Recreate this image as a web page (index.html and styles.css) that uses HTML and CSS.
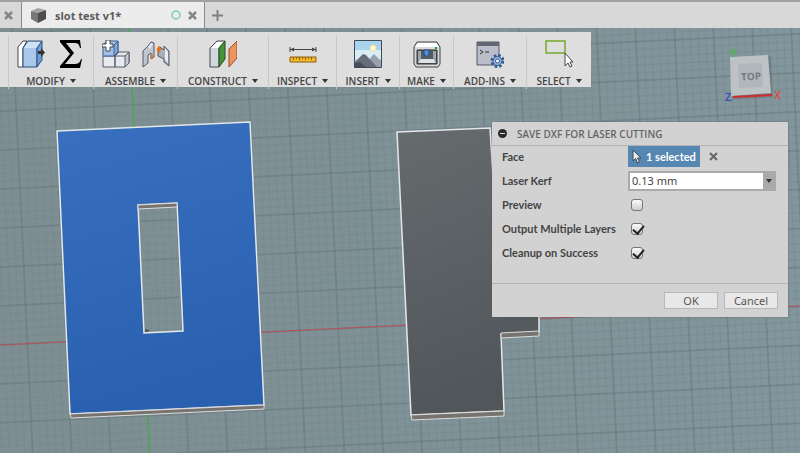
FILE: index.html
```html
<!DOCTYPE html>
<html lang="en">
<head>
  <meta charset="UTF-8">
  <meta name="viewport" content="width=device-width, initial-scale=1.0">
  <title>slot test v1*</title>
  <link rel="stylesheet" href="styles.css">
</head>
<body>

  <header class="tabs">
    <div class="tab tab-prev">
      <button class="tab-close" aria-label="Close previous tab"><svg width="9" height="9" viewBox="0 0 9 9"><path d="M1 1l7 7M8 1l-7 7"/></svg></button>
    </div>
    <div class="tab tab-active">
      <svg class="tab-icon" width="16" height="17" viewBox="0 0 16 17">
        <path fill="#a5a5a5" d="M0 4L7 1l8 2-8 3z"/>
        <path fill="#777" d="M0 4l7 2v10l-7-4z"/>
        <path fill="#4e4e4e" d="M7 6l8-3v9l-8 4z"/>
      </svg>
      <span class="tab-name">slot test v1*</span>
      <svg class="tab-status" width="10" height="10" viewBox="0 0 10 10"><circle cx="5" cy="5" r="4"/></svg>
      <button class="tab-close" aria-label="Close tab"><svg width="9" height="9" viewBox="0 0 9 9"><path d="M1 1l7 7M8 1l-7 7"/></svg></button>
    </div>
    <button class="tab-new" aria-label="New tab"><svg width="11" height="11" viewBox="0 0 11 11"><path d="M5.500 0v11M0 5.500h11"/></svg></button>
  </header>

  <main class="canvas">
    <!-- Model view -->
    <svg class="scene" viewBox="0 28 800 425" preserveAspectRatio="xMinYMin slice">
      <defs>
        <pattern id="grid" width="38.900" height="38.900" patternUnits="userSpaceOnUse" patternTransform="translate(144 338) rotate(-2.760)">
          <path class="grid-minor" d="M7.800 0v39M15.600 0v39M23.400 0v39M31.200 0v39M0 7.800h39M0 15.600h39M0 23.400h39M0 31.200h39"/>
          <path class="grid-major" d="M0 0v39M0 0h39M38.900 0v39M0 38.900h39"/>
        </pattern>
        <linearGradient id="floor" x1="0" y1="0" x2="1" y2="0">
          <stop offset="0" stop-color="#7e8e92"/>
          <stop offset=".45" stop-color="#7e9196"/>
          <stop offset="1" stop-color="#82969d"/>
        </linearGradient>
        <linearGradient id="blue" x1="0" y1="0" x2=".2" y2="1">
          <stop offset="0" stop-color="#386fbe"/>
          <stop offset="1" stop-color="#2a60b0"/>
        </linearGradient>
        <linearGradient id="gray" x1="0" y1="0" x2=".2" y2="1">
          <stop offset="0" stop-color="#666b6e"/>
          <stop offset="1" stop-color="#50565a"/>
        </linearGradient>
      </defs>
      <rect y="28" width="800" height="425" fill="url(#floor)"/>
      <rect y="28" width="800" height="425" fill="url(#grid)"/>
      <path class="axis-x" d="M0 345L800 306"/>
      <path class="axis-y" d="M129 28L149.500 453"/>

      <!-- Selected plate -->
      <path class="edge" fill="url(#blue)" fill-rule="evenodd" d="M57 131L250 122L264 405L70 414zM138 205L144 333L183 331L177 203z"/>
      <path class="side" d="M70 414l194-9v4l-193 9z"/>
      <path class="side" d="M138 205l39-2v4l-39 2z"/>
      <path fill="#555" d="M145 329l5 1-3 2h-2z"/>

      <!-- Second plate -->
      <path class="edge" fill="url(#gray)" d="M397 132L490 128L500 290L539 290L539 332L501 334L504 411L411 415z"/>
      <path class="side" d="M411 415l93-4v5l-92 4z"/>
      <path class="side" d="M501 333l38-2v5l-38 2z"/>

      <!-- View cube -->
      <g class="cube">
        <path fill="#000" opacity=".12" d="M733 58l38-2 2 41-40 2z"/>
        <path fill="#bdc2c5" d="M730 57l38-2 3 38-40 3z"/>
        <path fill="#b0b6bc" d="M738 64l24-1 1 24-24 1z"/>
        <text class="cube-face" x="741" y="80" transform="rotate(-3 750 75)">TOP</text>
        <path stroke="#cf2d2d" stroke-width="2" d="M733 97l39-2"/>
        <text class="cube-axis" fill="#3fbf3f" x="730" y="57">Y</text>
        <text class="cube-axis" fill="#e04545" x="774" y="99">X</text>
        <text class="cube-axis" fill="#3a46cf" x="725" y="101">Z</text>
      </g>
    </svg>

    <nav class="toolbar">
      <div class="group group-cut"></div>
      <div class="group">
        <div class="icons">
          <svg width="28" height="28" viewBox="0 0 28 28">
            <path fill="#fff" stroke="#444" d="M1 7l5-6h4L6 8v19H1z"/>
            <path fill="#a9c8ec" stroke="#2d4f7c" d="M6 8l5-7h14l-5 7v19H6z"/>
            <path fill="#cfe1f5" d="M7 8l4-6h13l-4 6z"/>
            <path fill="#6f9fd4" stroke="#2d4f7c" d="M20 8l5-7v19l-5 7z"/>
            <path fill="#333" d="M21 11h3V8l4 4.500-4 4.500v-3h-3z"/>
          </svg>
          <svg width="28" height="28" viewBox="0 0 28 28">
            <path d="M3 0h20l1 8h-1c-1-4-2-5-6-5H9l8 10L8 24h9c4 0 6-1 7-5h1l-2 9H3v-2l10-12L3 2z"/>
          </svg>
        </div>
        <button class="menu">MODIFY</button>
      </div>
      <div class="group">
        <div class="icons">
          <svg width="28" height="28" viewBox="0 0 28 28">
            <path fill="#e8eaef" stroke="#555c68" d="M1 16h12v11H1zM13 16l4-4h10v11l-4 4H13z"/>
            <path fill="#c3c8d2" stroke="#555c68" d="M23 16l4-4v11l-4 4z"/>
            <path fill="none" stroke="#555c68" d="M13 16h10"/>
            <path fill="#a3c1e8" stroke="#3b5f91" d="M1 5l4-4h11v11l-4 4H1z"/>
            <path fill="#7fa7da" stroke="#3b5f91" d="M12 5l4-4v11l-4 4z"/>
            <path fill="#fff" stroke="#444" d="M4 0h4v4h3v3H8v4H4V7H0V4h4z"/>
          </svg>
          <svg width="28" height="28" viewBox="0 0 28 28">
            <path fill="#c0c6d0" stroke="#525966" d="M1 11l5-5 3-4 3 1v14l-3 2v-6l-3 2v8l-5 4z"/>
            <path fill="#e8ebef" d="M6 7l3-4 2 1-3 5z"/>
            <path fill="#a8afbb" stroke="#525966" d="M16 10l2-3 4 3V6l5 5v15l-5-4v-3l-6-3z"/>
            <path fill="#e8ebef" d="M23 8l3 4v11l-3-3z"/>
            <path stroke="#f36b12" stroke-width="1.500" fill="none" d="M10 14v5M17 6v7M15 10l2-3 2 3"/>
          </svg>
        </div>
        <button class="menu">ASSEMBLE</button>
      </div>
      <div class="group">
        <div class="icons">
          <svg width="28" height="28" viewBox="0 0 28 28">
            <path fill="#d3d8e0" stroke="#454a52" d="M1 8l7-7h8l-6 7v19H1z"/>
            <path fill="#fff" d="M2 8l6-6h7l-6 6z"/>
            <path fill="#459334" stroke="#234f20" d="M10 8l6-7v18l-6 8z"/>
            <path fill="#ee945f" stroke="#9a4c25" d="M20 9l8-8v17l-8 9z"/>
          </svg>
        </div>
        <button class="menu">CONSTRUCT</button>
      </div>
      <div class="group">
        <div class="icons">
          <svg width="28" height="28" viewBox="0 0 28 28">
            <path stroke="#444" fill="none" d="M1 7v5M27 7v5M1 9.500h26"/>
            <path fill="#444" d="M1 9.500l4-2v4zM27 9.500l-4-2v4z"/>
            <path fill="#f3bb2b" stroke="#8f5d0b" d="M1 17h26v5H1z"/>
            <path stroke="#8f5d0b" d="M4.500 17v3M7.500 17v2M10.500 17v3M13.500 17v2M16.500 17v3M19.500 17v2M22.500 17v3"/>
          </svg>
        </div>
        <button class="menu">INSPECT</button>
      </div>
      <div class="group">
        <div class="icons">
          <svg width="28" height="28" viewBox="0 0 28 28">
            <path fill="#a9d4ed" d="M1 1h26v26H1z"/>
            <path fill="#d9edf5" d="M1 10h26v9H1z"/>
            <circle cx="19" cy="8" r="3" fill="#fffbe0" stroke="#f7dc8a"/>
            <path fill="#9aa1ad" d="M12 27l5-10 3-3 7 7v6z"/>
            <path fill="#676d7b" d="M1 22l8-8 3 1 11 12H1z"/>
            <path fill="#474d5b" d="M1 23l5-1 6 5H1z"/>
            <path fill="none" stroke="#3f4857" d="M.5.5h27v27H.5z"/>
          </svg>
        </div>
        <button class="menu">INSERT</button>
      </div>
      <div class="group">
        <div class="icons">
          <svg width="28" height="28" viewBox="0 0 28 28">
            <path fill="#d7dadd" stroke="#444" d="M1 7l3-5h20l3 5v17l-2 3H3l-2-3z"/>
            <path fill="#fff" d="M2 7l3-4h18l3 4z"/>
            <path fill="#555b64" stroke="#333" d="M4 10h20v14H4z"/>
            <path fill="#dfe3e8" d="M7 19h14l2 4H5z"/>
            <path fill="#9fa5ad" d="M5 11h3v7l-3 4zM20 11h3v11l-3-4z"/>
            <path fill="#4d91dc" stroke="#234f87" d="M11 10h5v4l-2.500 3-2.500-3z"/>
            <path fill="#17a51c" d="M22 7h2v2h-2z"/>
          </svg>
        </div>
        <button class="menu">MAKE</button>
      </div>
      <div class="group">
        <div class="icons">
          <svg width="28" height="28" viewBox="0 0 28 28">
            <path fill="#b9bec9" stroke="#555b66" d="M1 2h22v23H1z"/>
            <path fill="#626873" d="M1 2h22v4H1z"/>
            <path fill="none" stroke="#333" d="M4 10l3 2-3 2M9 12h4"/>
            <circle cx="21.500" cy="21" r="5.500" fill="none" stroke="#34598c" stroke-width="3" stroke-dasharray="2.500 1.820"/>
            <circle cx="21.500" cy="21" r="4.500" fill="#8fb4e2" stroke="#34598c"/>
            <circle cx="21.500" cy="21" r="2" fill="#fff" stroke="#34598c"/>
          </svg>
        </div>
        <button class="menu">ADD-INS</button>
      </div>
      <div class="group">
        <div class="icons">
          <svg width="28" height="28" viewBox="0 0 28 28">
            <path fill="none" stroke="#76a92c" stroke-width="1.500" d="M1 1h19v12H1z"/>
            <path fill="#fff" stroke="#444" d="M20 13v13l3-3 2 4 2-1-2-4h3z"/>
          </svg>
        </div>
        <button class="menu">SELECT</button>
      </div>
    </nav>

    <form class="dialog">
      <h1 class="dialog-title">
        <svg width="9" height="9" viewBox="0 0 9 9"><circle cx="4.500" cy="4.500" r="4.500" fill="#2b2b2b"/><path stroke="#ddd" d="M2 4.500h5"/></svg>
        SAVE DXF FOR LASER CUTTING
      </h1>
      <div class="rows">
        <div class="row">
          <label for="face">Face</label>
          <button type="button" class="pick" id="face">
            <svg width="10" height="15" viewBox="0 0 10 15"><path fill="#e9e9e9" stroke="#3a4a58" d="M1 1v11l2.500-2.500L5.500 14l2-1-2-4H9z"/></svg>
            1 selected
          </button>
          <button type="button" class="clear" aria-label="Clear selection"><svg width="9" height="9" viewBox="0 0 9 9"><path d="M1 1l7 7M8 1l-7 7"/></svg></button>
        </div>
        <div class="row">
          <label for="kerf">Laser Kerf</label>
          <div class="combo">
            <input type="text" id="kerf" value="0.13 mm">
            <button type="button" class="combo-arrow" aria-label="Kerf options"></button>
          </div>
        </div>
        <div class="row">
          <label for="preview">Preview</label>
          <input type="checkbox" id="preview">
        </div>
        <div class="row">
          <label for="layers">Output Multiple Layers</label>
          <input type="checkbox" id="layers" checked>
        </div>
        <div class="row">
          <label for="cleanup">Cleanup on Success</label>
          <input type="checkbox" id="cleanup" checked>
        </div>
      </div>
      <div class="actions">
        <button type="button">OK</button>
        <button type="button">Cancel</button>
      </div>
    </form>
  </main>

</body>
</html>
```
FILE: styles.css
```css
* {
  box-sizing: border-box;
}

body {
  margin: 0;
  min-height: 100vh;
  display: flex;
  flex-direction: column;
  font-family: "Noto Sans", "Open Sans", sans-serif;
  font-size: 11px;
  color: #444;
}

button {
  margin: 0;
  padding: 0;
  border: none;
  background: none;
  font: inherit;
  color: inherit;
}

svg {
  display: block;
  flex: none;
}

/* Tabs */
.tabs {
  display: flex;
  height: 28px;
  background: #d8d8d8;
  border-top: 2px solid #a0a19f;
}

.tab {
  display: flex;
  align-items: center;
  border-right: 1px solid #8b8b8b;
}

.tab-prev {
  width: 22px;
  padding-left: 4px;
}

.tab-active {
  width: 183px;
  padding: 0 7px 0 9px;
  background: #ececec;
}

.tab-name {
  flex: 1;
  margin-left: 8px;
  font-family: "Open Sans", sans-serif;
  font-size: 11px;
  font-weight: 700;
  color: #5a5a5a;
}

.tab-status {
  margin-right: 7px;
  fill: none;
  stroke: #7cc9b5;
  stroke-width: 1.5;
}

.tab-close svg,
.clear svg {
  stroke: #858585;
  stroke-width: 2.5;
}

.tab-new {
  padding: 0 7px;
}

.tab-new svg {
  stroke: #808080;
  stroke-width: 2;
}

/* Canvas */
.canvas {
  position: relative;
  flex: 1;
  padding-top: 4px;
  overflow: hidden;
  background: #7f9297;
}

.scene {
  position: absolute;
  top: 0;
  left: 0;
  width: 100%;
  height: 100%;
}

.grid-minor {
  stroke: #73858a;
  stroke-width: 0.6;
}

.grid-major {
  stroke: #66787d;
  stroke-width: 1;
}

.axis-x {
  stroke: #b85055;
}

.axis-y {
  stroke: #3fb83f;
}

.edge {
  stroke: #e4e8ea;
  stroke-width: 1.5;
}

.side {
  fill: #77736f;
  stroke: #dcdcdc;
}

.cube-face {
  font: 700 10px "Open Sans", sans-serif;
  fill: #747b82;
}

.cube-axis {
  font: 600 11px "Open Sans", sans-serif;
}

/* Toolbar */
.toolbar {
  position: relative;
  display: grid;
  grid-template-columns: 9px 85px 84px 91px 68px 63px 54px 73px 64px;
  width: max-content;
  height: 55px;
  padding: 4px 0;
  background: #dedede;
}

.group {
  display: flex;
  flex-direction: column;
  align-items: center;
  border-right: 1px solid #c8c8c8;
}

.group:last-child {
  border-right: none;
}

.icons {
  display: flex;
  gap: 12px;
  margin-top: 4px;
}

.menu {
  display: flex;
  align-items: center;
  gap: 5px;
  margin-top: 5px;
  font-family: "Open Sans", sans-serif;
  font-size: 10px;
  font-weight: 600;
  line-height: 16px;
}

.menu::after,
.combo-arrow::after {
  content: "";
  border: 3px solid transparent;
  border-top: 4px solid #333;
  border-bottom: none;
}

/* Dialog */
.dialog {
  position: absolute;
  top: 94px;
  right: 12px;
  width: 296px;
  background: #d2d2d2;
  box-shadow: 0 0 1px #555;
}

.dialog-title {
  display: flex;
  align-items: center;
  gap: 10px;
  height: 24px;
  margin: 0;
  padding: 0 6px;
  border-bottom: 1px solid #b2b2b2;
  font-family: "Open Sans", sans-serif;
  font-size: 10px;
  font-weight: 600;
  color: #666;
}

.rows {
  margin-top: -1px;
  padding-bottom: 18px;
}

.row {
  display: flex;
  align-items: center;
  height: 24px;
  padding: 0 12px 1px 10px;
}

.row label {
  flex: none;
  width: 126px;
  font-family: Lato, sans-serif;
  font-weight: 700;
}

.pick {
  display: flex;
  align-items: center;
  gap: 4px;
  height: 21px;
  padding: 0 4px;
  background: #5587b2;
  color: #fff;
  font-family: Lato, sans-serif;
  font-weight: 700;
}

.clear {
  margin-left: 9px;
}

.clear svg {
  stroke: #666;
  stroke-width: 2;
}

.combo {
  display: flex;
  flex: 1;
  min-width: 0;
  height: 20px;
  padding: 2px;
  background: #aaa;
}

.combo input {
  flex: 1;
  min-width: 0;
  padding: 0 2px;
  border: none;
  background: #fff;
  font: inherit;
  color: #444;
}

.combo-arrow {
  display: flex;
  flex: none;
  align-items: center;
  justify-content: center;
  width: 11px;
}

.row input[type="checkbox"] {
  appearance: none;
  width: 12px;
  height: 12px;
  margin: 0 0 0 3px;
  border: 1px solid #777;
  border-radius: 3px;
  background: linear-gradient(#fafafa, #cfcfcf);
}

.row input[type="checkbox"]:checked::after {
  content: "";
  display: block;
  width: 5px;
  height: 9px;
  margin: -1px 0 0 3px;
  border: solid #222;
  border-width: 0 2px 2px 0;
  transform: rotate(40deg);
}

.actions {
  display: flex;
  justify-content: flex-end;
  gap: 6px;
  padding: 8px 10px;
  border-top: 1px solid #b2b2b2;
}

.actions button {
  width: 54px;
  height: 17px;
  border: 1px solid #b8b8b8;
  background: #e8e8e8;
  font-size: 11px;
  line-height: 15px;
  color: #555;
}
```
